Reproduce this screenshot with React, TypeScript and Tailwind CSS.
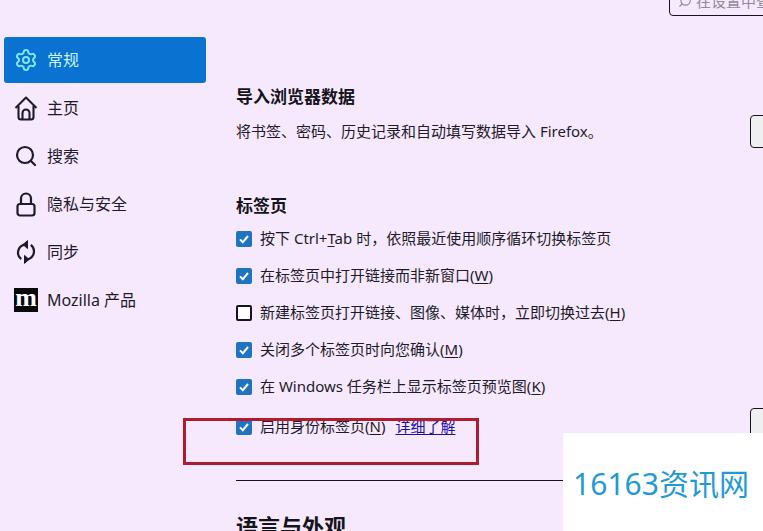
import React from "react";
import { Settings, Search } from "lucide-react";

const font = { fontFamily: '"Noto Sans", "Noto Sans CJK SC", sans-serif' };

function U({ children }: { children: React.ReactNode }) {
  return <span className="underline underline-offset-2">{children}</span>;
}

function NavItem({ icon, label, active }: { icon: React.ReactNode; label: string; active?: boolean }) {
  return (
    <div className={`flex items-center gap-[9px] h-[46px] w-[202px] pl-[10px] rounded-[3px] text-[16px] ${active ? "bg-[#0a72d0] text-[#c9f3ff]" : "text-[#1d1b29]"}`}>
      <span className="flex w-6 justify-center">{icon}</span>
      <span>{label}</span>
    </div>
  );
}

function Check({ checked, children }: { checked: boolean; children: React.ReactNode }) {
  return (
    <div className="flex h-[37px] items-center gap-[8px] text-[15px] text-[#1d1b29] whitespace-nowrap">
      {checked ? (
        <span className="flex h-4 w-4 shrink-0 items-center justify-center rounded-[2px] bg-[#1e74c0]">
          <svg width="12" height="12" viewBox="0 0 12 12" fill="none">
            <path d="M2 6.4 4.8 9.2 10 3" stroke="#fff" strokeWidth="2" />
          </svg>
        </span>
      ) : (
        <span className="h-4 w-4 shrink-0 rounded-[2px] border-2 border-[#15141a] bg-white" />
      )}
      <span>{children}</span>
    </div>
  );
}

function Mozilla() {
  return (
    <span className="flex h-[24px] w-[24px] items-center justify-center bg-[#0a0a0a] text-[26px] leading-none font-bold text-white pb-[5px]" style={{ fontFamily: '"Liberation Serif", serif' }}>
      m
    </span>
  );
}

function HomeIcon() {
  return (
    <svg width="24" height="26" viewBox="0 0 24 26" fill="none" stroke="#1d1b29" strokeWidth="2.1" strokeLinejoin="round">
      <path d="M1.5 13 12 2.5 22.5 13" />
      <path d="M4.5 11v11a2.5 2.5 0 0 0 2.5 2.5h10a2.5 2.5 0 0 0 2.5-2.5V11" />
      <path d="M8.5 24.5V18a3.5 3.5 0 0 1 7 0v6.5" />
    </svg>
  );
}

function LockIcon() {
  return (
    <svg width="24" height="26" viewBox="0 0 24 26" fill="none" stroke="#1d1b29" strokeWidth="2.2">
      <path d="M7 13V7.5a5 5 0 0 1 10 0V13" />
      <rect x="3.5" y="13" width="17" height="11.5" rx="2.5" />
    </svg>
  );
}

function SyncIcon() {
  return (
    <svg width="24" height="26" viewBox="0 0 24 26" fill="none" stroke="#1d1b29" strokeWidth="2.2">
      <path d="M7.2 20.2A8.3 8.3 0 0 1 10.5 5.6" />
      <path d="M16.8 5.8A8.3 8.3 0 0 1 13.5 20.4" />
      <path d="M13.5 1.6v8L9 5.6z" fill="#1d1b29" strokeWidth="1" />
      <path d="M10.5 16.4v8l4.5-4z" fill="#1d1b29" strokeWidth="1" />
    </svg>
  );
}

export default function App() {
  return (
    <div className="relative flex h-[531px] w-[763px] overflow-hidden bg-[#f7e9fd]" style={font}>
      <aside className="flex w-[236px] shrink-0 flex-col gap-[2px] pl-1 pt-[37px]">
        <NavItem active icon={<Settings size={26} strokeWidth={2} color="#7fe6fb" />} label="常规" />
        <NavItem icon={<HomeIcon />} label="主页" />
        <NavItem icon={<Search size={26} strokeWidth={2.2} color="#1d1b29" />} label="搜索" />
        <NavItem icon={<LockIcon />} label="隐私与安全" />
        <NavItem icon={<SyncIcon />} label="同步" />
        <NavItem icon={<Mozilla />} label="Mozilla 产品" />
      </aside>

      <main className="flex min-w-0 flex-1 flex-col">
        <div className="-mt-[14px] ml-[433px] flex h-[30px] w-[140px] shrink-0 items-center gap-1 rounded-[4px] border border-[#15141a] pl-2 text-[15px] whitespace-nowrap text-[#8f8b99]">
          <Search size={14} className="-scale-x-100" />
          <span>在设置中查找</span>
        </div>

        <section className="mt-[69px] flex flex-col">
          <h2 className="text-[17px] leading-6 font-bold text-[#15141a]">导入浏览器数据</h2>
          <div className="flex items-start">
            <p className="mt-[10px] w-[514px] shrink-0 text-[15px] leading-6 text-[#1d1b29]">将书签、密码、历史记录和自动填写数据导入 Firefox。</p>
            <div className="mt-[6px] h-[33px] w-[40px] shrink-0 rounded-[4px] border border-[#15141a] bg-[#efeef0]" />
          </div>
        </section>

        <section className="mt-[46px] flex flex-col">
          <h2 className="text-[17px] leading-6 font-bold text-[#15141a]">标签页</h2>
          <div className="mt-[2px] flex flex-col">
            <Check checked>按下 Ctrl+<U>T</U>ab 时，依照最近使用顺序循环切换标签页</Check>
            <Check checked>在标签页中打开链接而非新窗口(<U>W</U>)</Check>
            <Check checked={false}>新建标签页打开链接、图像、媒体时，立即切换过去(<U>H</U>)</Check>
            <Check checked>关闭多个标签页时向您确认(<U>M</U>)</Check>
            <Check checked>在 Windows 任务栏上显示标签页预览图(<U>K</U>)</Check>
            <div className="mt-[3px] flex items-start">
              <div className="w-[514px] shrink-0">
                <Check checked>
                  启用身份标签页(<U>N</U>)<a className="ml-[10px] text-[#1a0dab] underline underline-offset-2">详细了解</a>
                </Check>
              </div>
              <div className="h-[33px] w-[40px] shrink-0 rounded-[4px] border border-[#15141a] bg-[#efeef0]" />
            </div>
          </div>
        </section>

        <hr className="mt-[35px] w-[514px] shrink-0 border-t border-[#15141a]" />
        <h2 className="mt-[30px] text-[22px] leading-[30px] font-bold whitespace-nowrap text-[#15141a]">语言与外观</h2>
      </main>

      <div className="absolute top-[418px] left-[183px] h-[47px] w-[296px] border-[3px] border-[#b01c2e]" />
      <div className="absolute top-[433px] left-[563px] flex h-[98px] w-[200px] items-center justify-center bg-white pt-[2px] pr-[4px] text-[30px] whitespace-nowrap text-[#1f9ad6]">
        16163资讯网
      </div>
    </div>
  );
}
